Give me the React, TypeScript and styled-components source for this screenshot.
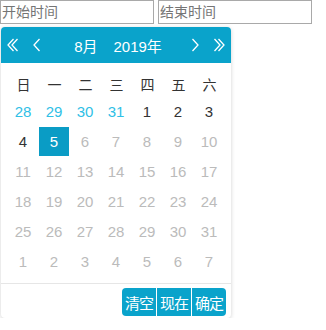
import { createGlobalStyle } from 'styled-components';
import styled from 'styled-components';

const GlobalStyle = createGlobalStyle`
  body {
    margin: 0;
    background: #fff;
    font-family: "Liberation Sans", "Noto Sans CJK SC", sans-serif;
  }
`;

const Page = styled.div`
  padding: 0;
`;

const InputRow = styled.div`
  display: flex;
  gap: 4px;
`;

const DateInput = styled.input`
  box-sizing: border-box;
  width: 154px;
  height: 24px;
  border: 1px solid #a9a9a9;
  padding: 0 1px;
  font-family: "Liberation Sans", "Noto Sans CJK SC", sans-serif;
  font-size: 14px;
  color: #333;
  outline: none;
  &::placeholder {
    color: #757575;
  }
`;

const Calendar = styled.div`
  box-sizing: border-box;
  margin: 3px 0 0 1px;
  width: 230px;
  background: #fff;
  border-radius: 4px;
  box-shadow: 0 1px 4px rgba(0, 0, 0, 0.18);
  overflow: hidden;
`;

const Header = styled.div`
  height: 36px;
  background: #0aa3cb;
  color: #fff;
  display: flex;
  align-items: center;
`;

const NavButton = styled.span`
  width: 24px;
  display: flex;
  justify-content: center;
  align-items: center;
`;

const Title = styled.div`
  flex: 1;
  display: flex;
  justify-content: center;
  gap: 16px;
  font-size: 15px;
  padding-left: 4px;
`;

const Grid = styled.div`
  display: grid;
  grid-template-columns: repeat(7, 31px);
  grid-template-rows: 24px repeat(6, 30px);
  padding: 9px 6px 7px 7px;
`;

const WeekDay = styled.div`
  display: flex;
  align-items: center;
  justify-content: center;
  font-size: 14px;
  color: #333;
`;

const Day = styled.div<{ $kind: 'prev' | 'cur' | 'next'; $selected?: boolean }>`
  display: flex;
  align-items: center;
  justify-content: center;
  font-size: 15px;
  color: ${(p) =>
    p.$selected ? '#fff' : p.$kind === 'prev' ? '#2fc0e6' : p.$kind === 'cur' ? '#333' : '#bbb'};
  background: ${(p) => (p.$selected ? '#0a9cc5' : 'transparent')};
  width: 30px;
  height: 29px;
  margin-top: 1px;
`;

const Footer = styled.div`
  border-top: 1px solid #e6e6e6;
  display: flex;
  justify-content: flex-end;
  padding: 4px 5px 2px 0;
`;

const ButtonGroup = styled.div`
  display: flex;
  gap: 1px;
  border-radius: 4px;
  overflow: hidden;
`;

const FootButton = styled.button`
  height: 28px;
  width: 34px;
  border: none;
  padding: 0;
  background: #0aa3cb;
  color: #fff;
  font-family: "Noto Sans CJK SC", sans-serif;
  font-size: 15px;
  letter-spacing: -1px;
`;

const Chevron = ({ double, left }: { double?: boolean; left?: boolean }) => (
  <svg width="16" height="16" viewBox="0 0 16 16" fill="none" stroke="#fff" strokeWidth="1.3">
    <g transform={left ? 'translate(16 0) scale(-1 1)' : undefined}>
      {double ? (
        <>
          <path d="M3.5 2 L9 8 L3.5 14" />
          <path d="M7.5 2 L13 8 L7.5 14" />
        </>
      ) : (
        <path d="M5.5 2 L11 8 L5.5 14" />
      )}
    </g>
  </svg>
);

const weekDays = ['日', '一', '二', '三', '四', '五', '六'];

type Cell = { n: number; kind: 'prev' | 'cur' | 'next'; selected?: boolean };

const buildDays = (): Cell[] => {
  const cells: Cell[] = [];
  for (let d = 28; d <= 31; d++) cells.push({ n: d, kind: 'prev' });
  for (let d = 1; d <= 31; d++) {
    if (d <= 5) cells.push({ n: d, kind: 'cur', selected: d === 5 });
    else cells.push({ n: d, kind: 'next' });
  }
  for (let d = 1; d <= 7; d++) cells.push({ n: d, kind: 'next' });
  return cells;
};

const App = () => {
  const days = buildDays();

  return (
    <Page>
      <GlobalStyle />
      <InputRow>
        <DateInput placeholder="开始时间" />
        <DateInput placeholder="结束时间" />
      </InputRow>
      <Calendar>
        <Header>
          <NavButton><Chevron double left /></NavButton>
          <NavButton><Chevron left /></NavButton>
          <Title>
            <span>8月</span>
            <span>2019年</span>
          </Title>
          <NavButton><Chevron /></NavButton>
          <NavButton><Chevron double /></NavButton>
        </Header>
        <Grid>
          {weekDays.map((w) => (
            <WeekDay key={w}>{w}</WeekDay>
          ))}
          {days.map((c, i) => (
            <Day key={i} $kind={c.kind} $selected={c.selected}>
              {c.n}
            </Day>
          ))}
        </Grid>
        <Footer>
          <ButtonGroup>
            <FootButton>清空</FootButton>
            <FootButton>现在</FootButton>
            <FootButton>确定</FootButton>
          </ButtonGroup>
        </Footer>
      </Calendar>
    </Page>
  );
};

export default App;
